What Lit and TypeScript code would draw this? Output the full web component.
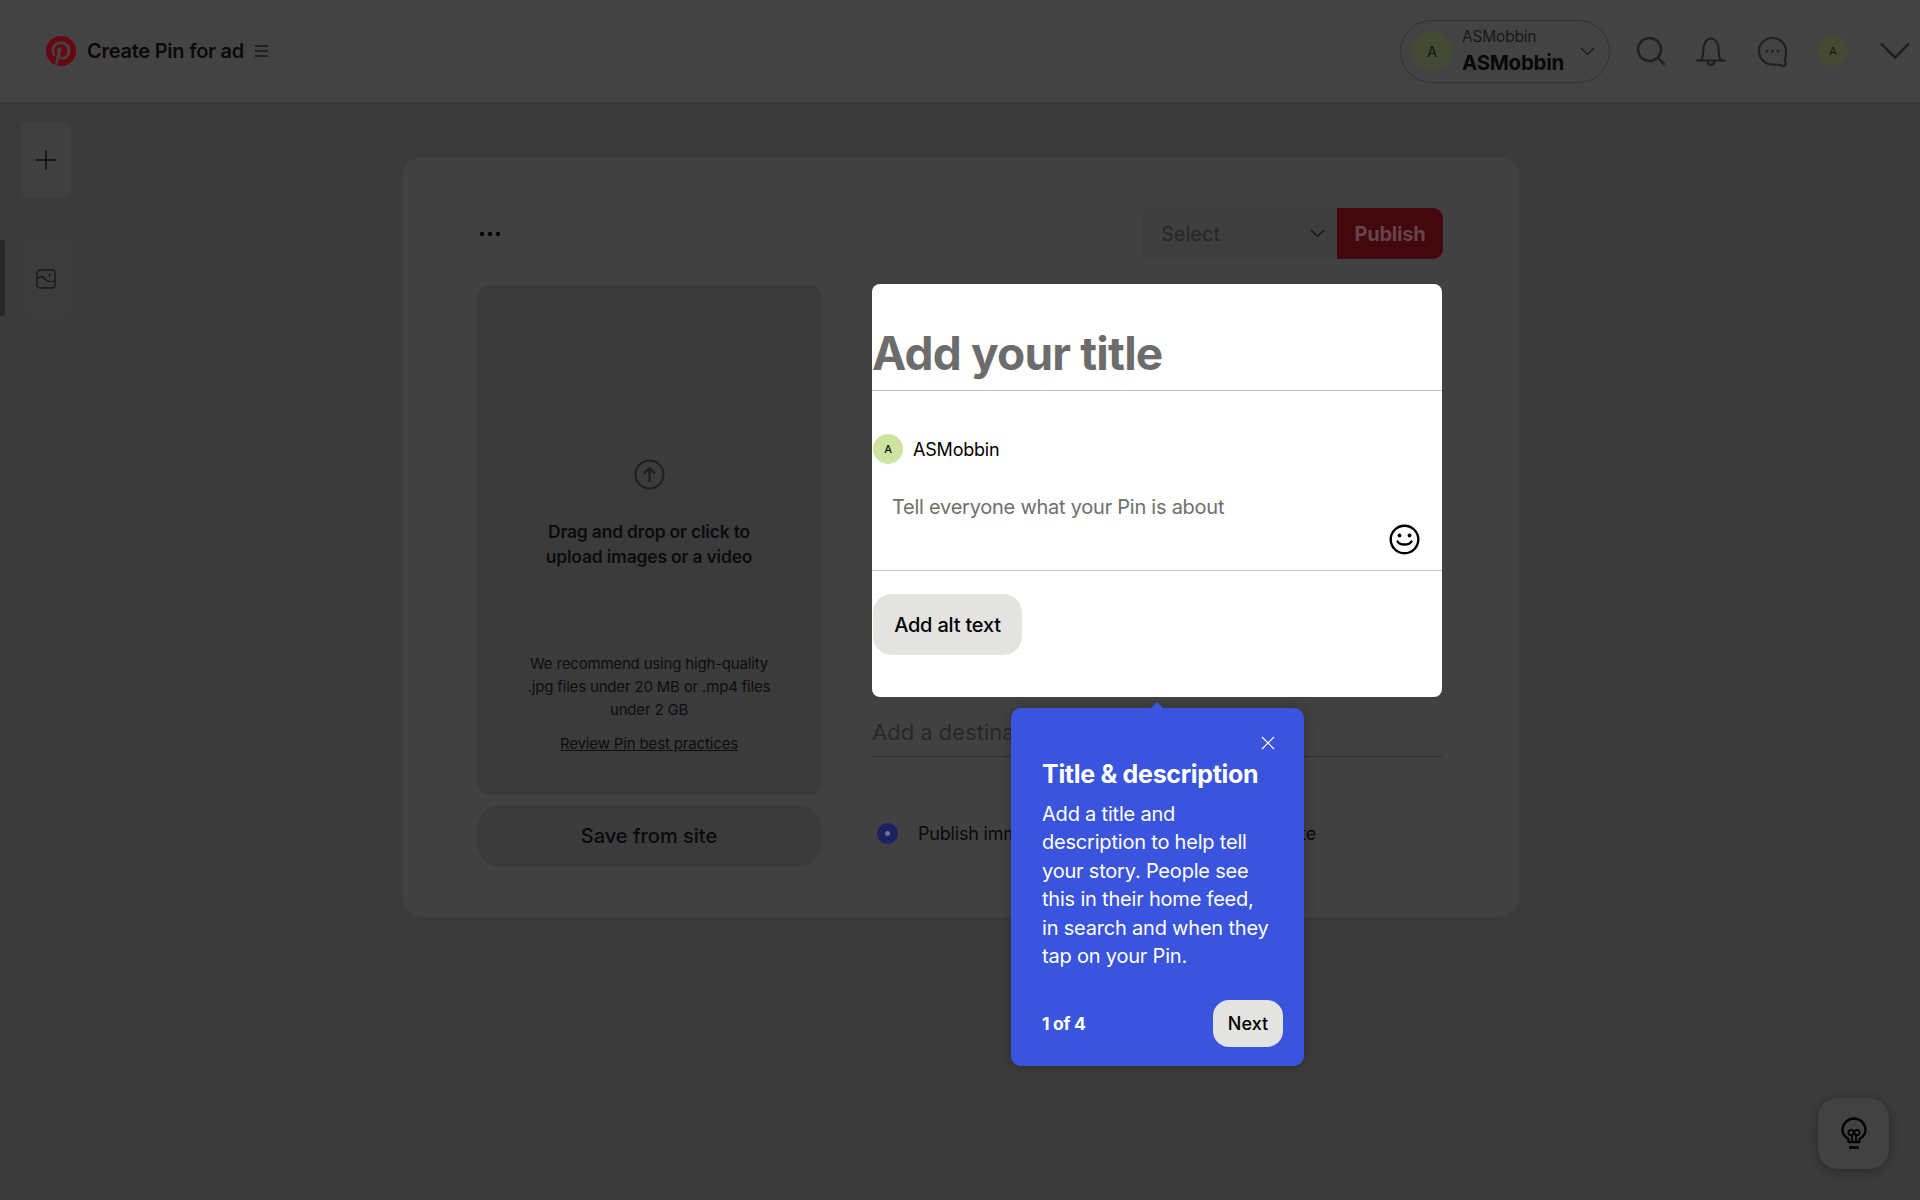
import { LitElement, html, css } from "lit";
import { customElement } from "lit/decorators.js";

const avatar = (cls: string) => html`<span class="avatar ${cls}">A</span>`;

@customElement("app-root")
export class AppRoot extends LitElement {
  static styles = css`
    :host { display: block; position: relative; width: 1920px; height: 1200px; overflow: hidden; background: #3b3b3b; font-family: Inter, "Liberation Sans", sans-serif; color: #0d0d0d; }
    svg { display: block; flex: none; }
    header { height: 102px; box-sizing: border-box; background: #434343; display: flex; align-items: center; padding: 0 10px 0 46px; }
    .brand { font-size: 20px; font-weight: 600; margin-left: 11px; letter-spacing: -0.25px; color: #0a0a0a; }
    .menu { margin-left: 11px; }
    .spacer { flex: 1; }
    .pill { width: 210px; height: 63px; box-sizing: border-box; border: 1px solid #323232; border-radius: 32px; display: flex; align-items: center; padding-left: 11px; margin-right: 26px; }
    .avatar { display: flex; align-items: center; justify-content: center; border-radius: 50%; flex: none; }
    .av-lg { width: 40px; height: 40px; background: #454b33; font-size: 14px; color: #111; }
    .av-sm { width: 30px; height: 30px; background: #454b33; font-size: 11px; color: #111; }
    .av-light { width: 30px; height: 30px; background: #cde3a0; font-size: 11px; font-weight: 500; color: #111; }
    .who { margin-left: 10px; width: 118px; line-height: 1; }
    .who small { display: block; font-size: 15.5px; color: #181818; letter-spacing: -0.2px; margin-bottom: 7px; position: relative; top: -1px; }
    .who b { display: block; font-size: 20.5px; font-weight: 700; letter-spacing: -0.3px; color: #080808; position: relative; top: 1px; }
    .hicons { display: flex; align-items: center; }
    .bell { margin-left: 29px; }
    .chat { margin-left: 30px; }
    .me { margin-left: 30px; }
    .caret { margin-left: 32px; }
    .content { display: flex; height: 1098px; }
    .rail { width: 402px; flex: none; padding-top: 20px; box-sizing: border-box; display: flex; flex-direction: column; }
    .rail-plus { margin-left: 21px; width: 50px; height: 76px; background: #404040; border-radius: 8px; display: flex; align-items: center; justify-content: center; }
    .rail-row { display: flex; margin-top: 42px; }
    .rail-mark { width: 5px; height: 76px; background: #292929; border-radius: 0 3px 3px 0; }
    .rail-img { margin-left: 19px; width: 48px; height: 78px; background: #3c3c3c; display: flex; align-items: center; justify-content: center; border-radius: 6px; }
    .rail-img svg { margin-right: 5px; }
    .card { margin-top: 55px; width: 1117px; height: 760px; box-sizing: border-box; padding: 51px 76px 0 75px; background: #414141; border-radius: 20px; }
    .top { display: flex; justify-content: space-between; align-items: center; height: 51px; }
    .dots { margin-left: 2px; }
    .actions { display: flex; height: 51px; }
    .select { width: 195px; box-sizing: border-box; background: #3e3e3e; border-radius: 8px 0 0 8px; padding: 0 12px 0 19px; display: flex; align-items: center; justify-content: space-between; font-size: 20px; color: #262626; }
    .publish { width: 106px; background: #42080e; border-radius: 0 10px 10px 0; display: flex; align-items: center; justify-content: center; font-size: 20px; font-weight: 700; color: #664449; letter-spacing: -0.2px; }
    .cols { display: flex; gap: 51px; margin-top: 25px; }
    .left { width: 344px; flex: none; padding-top: 1px; }
    .drop { height: 510px; box-sizing: border-box; background: #3b3b3b; border-radius: 12px; display: flex; flex-direction: column; align-items: center; text-align: center; padding-top: 174px; }
    .drop h3 { margin: 30px 0 0; font-size: 17.5px; line-height: 24.5px; font-weight: 600; letter-spacing: -0.2px; color: #0c0c0c; }
    .drop p { margin: 83px 0 0; font-size: 15px; line-height: 23px; color: #0e0e0e; letter-spacing: -0.18px; }
    .drop a { margin-top: 11px; font-size: 15px; line-height: 23px; color: #0e0e0e; text-decoration: underline; letter-spacing: -0.15px; }
    .save { margin-top: 10px; height: 62px; border-radius: 24px; background: #3b3b3b; display: flex; align-items: center; justify-content: center; font-size: 20px; font-weight: 500; color: #0a0a0a; }
    .right { width: 570px; flex: none; }
    .panel { height: 413px; box-sizing: border-box; background: #fff; border-radius: 8px; display: flex; flex-direction: column; color: #000; }
    .title { height: 107px; box-sizing: border-box; border-bottom: 1.5px solid #c4c4c4; display: flex; align-items: flex-end; padding-bottom: 9px; font-size: 46px; line-height: 56px; font-weight: 700; color: #6c6c6c; letter-spacing: -0.8px; }
    .owner { display: flex; align-items: center; gap: 10px; margin: 43px 0 0 1px; font-size: 18px; letter-spacing: -0.2px; }
    .desc { flex: none; height: 107px; box-sizing: border-box; border-bottom: 1.5px solid #c4c4c4; padding: 29px 20px 0 20px; font-size: 20px; line-height: 28px; color: #6e6e6e; letter-spacing: -0.25px; position: relative; }
    .smile { position: absolute; right: 22px; top: 60px; }
    .alt { margin: 23px 0 0 1px; width: 149px; height: 61px; border-radius: 19px; background: #e3e3e0; display: flex; align-items: center; justify-content: center; font-size: 20px; font-weight: 500; letter-spacing: -0.2px; }
    .dest { height: 60px; box-sizing: border-box; border-bottom: 1px solid #303030; font-size: 22px; line-height: 26px; padding-top: 22px; color: #282828; }
    .radios { display: flex; align-items: center; margin-top: 66px; font-size: 18px; color: #0a0a0a; padding-left: 5px; letter-spacing: -0.2px; }
    .radio { width: 21px; height: 21px; border-radius: 50%; background: #1a2360; display: flex; align-items: center; justify-content: center; margin-right: 20px; }
    .radio i { width: 5px; height: 5px; border-radius: 50%; background: #6f7494; }
    .later { margin-left: auto; margin-right: 126px; }
    .pop { position: absolute; left: 1011px; top: 708px; width: 293px; height: 358px; box-sizing: border-box; background: #3a54dd; border-radius: 10px; color: #fff; padding: 0 21px 0 31px; box-shadow: 0 0 12px rgba(0,0,0,.25); }
    .pop::before { content: ""; position: absolute; left: 141px; top: -4px; width: 10px; height: 10px; background: #3a54dd; transform: rotate(45deg); border-radius: 2px; }
    .pop-x { position: absolute; right: 29px; top: 28px; }
    .pop h2 { margin: 52px 0 0; font-size: 25px; line-height: 28px; font-weight: 700; letter-spacing: -0.3px; }
    .pop p { margin: 12px 0 0; font-size: 20px; line-height: 28.4px; font-weight: 400; letter-spacing: -0.2px; }
    .pop-foot { position: absolute; left: 31px; right: 21px; bottom: 19px; display: flex; align-items: center; justify-content: space-between; }
    .count { font-size: 17.5px; font-weight: 700; letter-spacing: -0.3px; }
    .next { width: 70px; height: 47px; border-radius: 16px; background: #e3e3e0; color: #000; display: flex; align-items: center; justify-content: center; font-size: 18px; font-weight: 500; }
    .help { position: absolute; left: 1818px; top: 1098px; width: 71px; height: 71px; border-radius: 20px; background: #424242; box-shadow: 0 2px 12px rgba(0,0,0,.3); display: flex; align-items: center; justify-content: center; }
  `;

  render() {
    return html`
      <header>
        <svg width="30" height="30" viewBox="0 0 24 24"><path fill="#68070f" d="M12 0a12 12 0 0 0-4.37 23.17c-.1-.95-.2-2.4.04-3.44l1.4-5.96s-.35-.72-.35-1.78c0-1.66.97-2.9 2.17-2.9 1.02 0 1.52.77 1.52 1.68 0 1.03-.65 2.56-.99 3.98-.28 1.19.6 2.16 1.78 2.16 2.13 0 3.77-2.25 3.77-5.49 0-2.87-2.06-4.88-5.01-4.88-3.41 0-5.42 2.56-5.42 5.21 0 1.03.4 2.13.89 2.73.1.12.11.22.08.34l-.33 1.36c-.05.22-.18.27-.4.16-1.5-.7-2.43-2.89-2.43-4.65 0-3.78 2.75-7.26 7.92-7.26 4.16 0 7.4 2.97 7.4 6.93 0 4.13-2.6 7.46-6.22 7.46-1.21 0-2.36-.63-2.75-1.38l-.75 2.85c-.27 1.04-1 2.35-1.49 3.14A12 12 0 1 0 12 0z"/></svg>
        <span class="brand">Create Pin for ad</span>
        <svg class="menu" width="13" height="12" viewBox="0 0 13 12" fill="none" stroke="#050505" stroke-width="1.2"><path d="M0 1h13M0 6h13M0 11h13"/></svg>
        <span class="spacer"></span>
        <div class="pill">
          ${avatar("av-lg")}
          <div class="who"><small>ASMobbin</small><b>ASMobbin</b></div>
          <svg width="15" height="9" viewBox="0 0 15 9" fill="none" stroke="#161616" stroke-width="1.1"><path d="M1 1l6.5 6.5L14 1"/></svg>
        </div>
        <div class="hicons">
          <svg width="30" height="30" viewBox="0 0 30 30" fill="none" stroke="#202020" stroke-width="2.4" stroke-linecap="round"><circle cx="13.5" cy="13.5" r="11.5"/><path d="M22 22l6 6"/></svg>
          <svg class="bell" width="32" height="30" viewBox="0 0 32 30" fill="none" stroke="#202020" stroke-width="2.2" stroke-linecap="round" stroke-linejoin="round"><path d="M2 24.5h28M6 24.500c1.800-2.500 2.200-5 2.200-9.500 0-6 2.500-12.500 7.800-12.500s7.800 6.500 7.800 12.500c0 4.500.4 7 2.200 9.500"/><path d="M12.500 25c.3 2.500 1.700 3.800 3.500 3.800s3.200-1.300 3.500-3.800"/></svg>
          <svg class="chat" width="31" height="31" viewBox="0 0 31 31" fill="none" stroke="#202020" stroke-width="2.2" stroke-linejoin="round"><path d="M15.500 2C8 2 2 7.800 2 15s6 13.500 13.500 13.500c3 0 7-.3 9 1.200 1.800 1 4.500 0 4-2 -.2-1.200-.5-3-.4-4.500 .6-2 .9-5 .9-8.200C29 7.800 23 2 15.500 2z"/><g fill="#202020" stroke="none"><circle cx="10" cy="15" r="1.500"/><circle cx="15.500" cy="15" r="1.500"/><circle cx="21" cy="15" r="1.500"/></g></svg>
          <span class="me">${avatar("av-sm")}</span>
          <svg class="caret" width="30" height="18" viewBox="0 0 30 18" fill="none" stroke="#1c1c1c" stroke-width="2.400"><path d="M1 1.500l14 14 14-14"/></svg>
        </div>
      </header>
      <div class="content">
        <nav class="rail">
          <div class="rail-plus"><svg width="20" height="20" viewBox="0 0 20 20" stroke="#0a0a0a" stroke-width="1.4"><path d="M10 0v20M0 10h20"/></svg></div>
          <div class="rail-row">
            <span class="rail-mark"></span>
            <div class="rail-img"><svg width="20" height="20" viewBox="0 0 20 20" fill="none" stroke="#181818" stroke-width="1.300"><rect x="1" y="1" width="18" height="18" rx="3"/><path d="M1 10c3-3 5.500-3 8 0s6 3.500 10 1"/><circle cx="13.500" cy="6" r="1.200" fill="#181818" stroke="none"/></svg></div>
          </div>
        </nav>
        <section class="card">
          <div class="top">
            <svg class="dots" width="22" height="6" viewBox="0 0 22 6" fill="#060606"><circle cx="3" cy="3" r="2.200"/><circle cx="11" cy="3" r="2.200"/><circle cx="19" cy="3" r="2.200"/></svg>
            <div class="actions">
              <div class="select">Select<svg width="15" height="9" viewBox="0 0 15 9" fill="none" stroke="#111" stroke-width="1.100"><path d="M1 1l6.500 6.500L14 1"/></svg></div>
              <div class="publish">Publish</div>
            </div>
          </div>
          <div class="cols">
            <div class="left">
              <div class="drop">
                <svg width="31" height="31" viewBox="0 0 31 31" fill="none" stroke="#1e1e1e" stroke-width="2"><circle cx="15.500" cy="15.500" r="14"/><path d="M15.500 23V9M10 14.500l5.500-5.500 5.500 5.500" stroke-width="2.200"/></svg>
                <h3>Drag and drop or click to<br />upload images or a video</h3>
                <p>We recommend using high-quality<br />.jpg files under 20 MB or .mp4 files<br />under 2 GB</p>
                <a>Review Pin best practices</a>
              </div>
              <div class="save">Save from site</div>
            </div>
            <div class="right">
              <div class="panel">
                <div class="title">Add your title</div>
                <div class="owner">${avatar("av-light")}ASMobbin</div>
                <div class="desc">Tell everyone what your Pin is about
                  <svg class="smile" width="31" height="31" viewBox="0 0 31 31" fill="none" stroke="#000" stroke-width="2.400" stroke-linecap="round"><circle cx="15.500" cy="15.500" r="13.800"/><path d="M8.500 17.500c2 4 12 4 14 0"/><circle cx="10.500" cy="11.500" r="1.900" fill="#000" stroke="none"/><circle cx="20.500" cy="11.500" r="1.900" fill="#000" stroke="none"/></svg>
                </div>
                <div class="alt">Add alt text</div>
              </div>
              <div class="dest">Add a destination link</div>
              <div class="radios"><span class="radio"><i></i></span><span class="r-one">Publish immediately</span><span class="later">Publish at a later date</span></div>
            </div>
          </div>
        </section>
      </div>
      <aside class="pop">
        <svg class="pop-x" width="14" height="14" viewBox="0 0 14 14" stroke="#fff" stroke-width="1.200"><path d="M1 1l12 12M13 1L1 13"/></svg>
        <h2>Title &amp; description</h2>
        <p>Add a title and<br />description to help tell<br />your story. People see<br />this in their home feed,<br />in search and when they<br />tap on your Pin.</p>
        <div class="pop-foot"><span class="count">1 of 4</span><span class="next">Next</span></div>
      </aside>
      <div class="help">
        <svg width="26" height="33" viewBox="0 0 26 33" fill="none" stroke="#030303" stroke-width="2.300" stroke-linejoin="round"><path d="M7.500 25v-3C4 20 1.500 16.800 1.500 13a11.500 11.500 0 0 1 23 0c0 3.800-2.500 7-6 9v3z"/><circle cx="10" cy="15.500" r="2.600" stroke-width="1.900"/><circle cx="16" cy="15.500" r="2.600" stroke-width="1.900"/><path d="M11 18v7M15 18v7" stroke-width="1.900"/><path d="M8 30.500h10" stroke-width="2.600"/></svg>
      </div>
    `;
  }
}
